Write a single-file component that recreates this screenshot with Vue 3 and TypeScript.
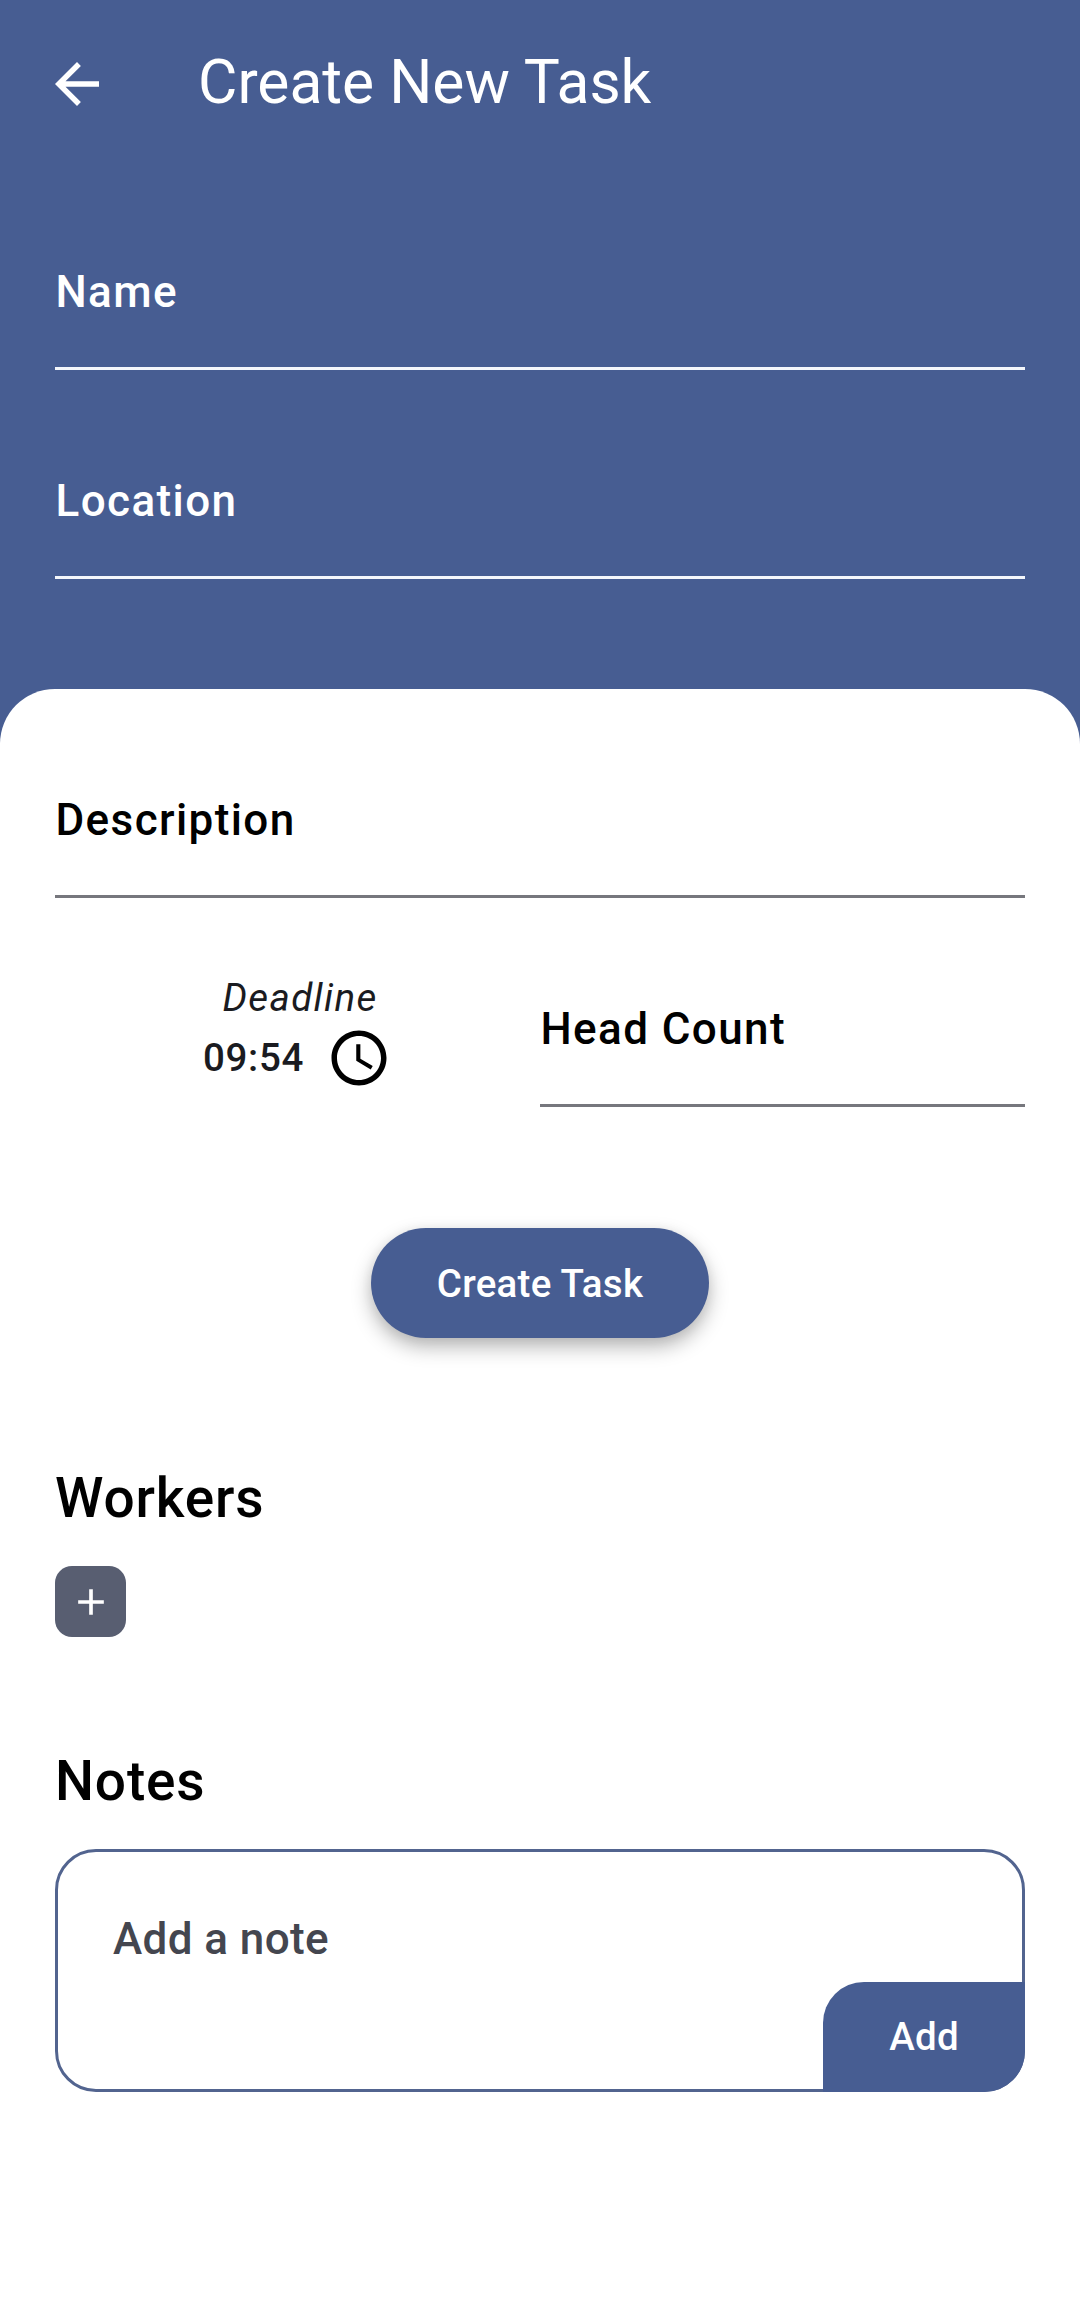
<script setup lang="ts">
import { ref } from 'vue'

const headerFields: string[] = ['Name', 'Location']
const deadline = ref<string>('09:54')
</script>

<template>
  <div class="screen">
    <header class="top">
      <div class="app-bar">
        <svg class="back" viewBox="0 0 24 24" aria-hidden="true">
          <path d="M20 11H7.83l5.59-5.59L12 4l-8 8 8 8 1.41-1.41L7.83 13H20v-2z" fill="currentColor" />
        </svg>
        <h1 class="title">Create New Task</h1>
      </div>
      <div class="header-fields">
        <div v-for="field in headerFields" :key="field" class="field light">{{ field }}</div>
      </div>
    </header>

    <main class="sheet">
      <div class="field">Description</div>

      <div class="row">
        <div class="deadline">
          <span class="caption">Deadline</span>
          <div class="time">
            <span>{{ deadline }}</span>
            <svg class="clock" viewBox="0 0 24 24" aria-hidden="true">
              <path
                d="M11.99 2C6.47 2 2 6.48 2 12s4.47 10 9.99 10C17.52 22 22 17.52 22 12S17.52 2 11.99 2zM12 20c-4.42 0-8-3.58-8-8s3.58-8 8-8 8 3.58 8 8-3.58 8-8 8zm.5-13H11v6l5.25 3.15.75-1.23-4.5-2.67z"
                fill="currentColor"
              />
            </svg>
          </div>
        </div>
        <div class="field half">Head Count</div>
      </div>

      <button class="create" type="button">Create Task</button>

      <h2 class="section workers">Workers</h2>
      <button class="plus" type="button" aria-label="Add worker">
        <svg viewBox="0 0 24 24" aria-hidden="true">
          <path d="M19 13h-6v6h-2v-6H5v-2h6V5h2v6h6v2z" fill="currentColor" />
        </svg>
      </button>

      <h2 class="section notes">Notes</h2>
      <div class="note">
        <span class="placeholder">Add a note</span>
        <button class="add" type="button">Add</button>
      </div>
    </main>
  </div>
</template>

<style>
body {
  margin: 0;
  background: #fff;
}
</style>

<style scoped>
.screen {
  box-sizing: border-box;
  width: 1080px;
  height: 2313px;
  overflow: hidden;
  background: #475d92;
  font-family: Roboto, sans-serif;
  color: #1a1b21;
  display: flex;
  flex-direction: column;
}

button {
  border: 0;
  padding: 0;
  margin: 0;
  font-family: inherit;
  font-size: 38.5px;
  font-weight: 500;
  letter-spacing: 0.275px;
  color: #fff;
  background: #475d92;
}

.top {
  height: 689px;
  flex: none;
  color: #fff;
}

.app-bar {
  height: 166px;
  display: flex;
  align-items: center;
  padding-left: 44px;
}

.back {
  width: 66px;
  height: 66px;
  margin-top: 2px;
}

.title {
  margin: 0 0 0 88px;
  font-size: 60.5px;
  line-height: 80px;
  font-weight: 400;
}

.header-fields {
  display: flex;
  flex-direction: column;
  gap: 55px;
  padding: 50px 55px 0;
}

.field {
  box-sizing: border-box;
  height: 154px;
  border-bottom: 3px solid #76777d;
  padding-left: 0.5px;
  line-height: 152px;
  font-size: 44px;
  font-weight: 500;
  letter-spacing: 1.4px;
  color: #000;
}

.field.light {
  color: #fff;
  border-color: #f4f6fb;
}

.sheet {
  box-sizing: border-box;
  flex: 1;
  display: flex;
  flex-direction: column;
  align-items: stretch;
  padding: 55px 55px 0;
  background: #fff;
  border-radius: 55px 55px 0 0;
}

.row {
  display: flex;
  margin-top: 55px;
}

.deadline {
  width: 485px;
  display: flex;
  flex-direction: column;
  align-items: center;
  padding-top: 17px;
  box-sizing: border-box;
}

.caption {
  font-size: 38.5px;
  line-height: 55px;
  font-style: italic;
  letter-spacing: 1.35px;
  padding-left: 5px;
}

.time {
  display: flex;
  align-items: center;
  gap: 22px;
  font-size: 38.5px;
  line-height: 66px;
  font-weight: 500;
  letter-spacing: 0.6875px;
}

.clock {
  width: 66px;
  height: 66px;
  color: #000;
}

.half {
  flex: 1;
}

.create {
  align-self: center;
  width: 338px;
  height: 110px;
  margin-top: 121px;
  border-radius: 55px;
  box-shadow: 0 9px 20px rgba(0, 0, 0, 0.28), 0 2px 12px rgba(0, 0, 0, 0.06);
}

.section {
  margin: 0;
  font-size: 55px;
  line-height: 77px;
  font-weight: 500;
  letter-spacing: 0.825px;
  color: #000;
}

.workers {
  margin-top: 122px;
}

.plus {
  width: 71px;
  height: 71px;
  margin-top: 29px;
  border-radius: 17px;
  background: #585e71;
  display: flex;
  align-items: center;
  justify-content: center;
}

.plus svg {
  width: 44px;
  height: 44px;
}

.notes {
  margin-top: 106px;
}

.note {
  box-sizing: border-box;
  height: 243px;
  margin-top: 29px;
  border: 3px solid #52648f;
  border-radius: 41px;
  display: flex;
  flex-direction: column;
  justify-content: space-between;
}

.placeholder {
  padding: 54px 0 0 55px;
  font-size: 44px;
  line-height: 66px;
  font-weight: 500;
  letter-spacing: 0.4px;
  color: #44464f;
}

.add {
  box-sizing: border-box;
  align-self: flex-end;
  width: 202px;
  height: 110px;
  margin: 0 -3px -3px 0;
  padding-bottom: 2px;
  border-radius: 41px 0 41px 0;
}
</style>
